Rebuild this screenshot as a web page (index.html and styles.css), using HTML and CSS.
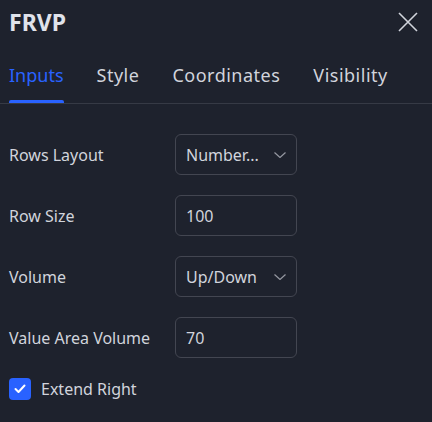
FILE: index.html
```html
<!DOCTYPE html>
<html>
<head>
<meta charset="utf-8">
<link rel="stylesheet" href="styles.css">
</head>
<body>
<div class="dialog">
  <div class="header">
    <div class="title">FRVP</div>
    <svg class="close" width="20" height="20" viewBox="0 0 20 20"><path d="M1 1L19 19M19 1L1 19" stroke="#d1d4dc" stroke-width="1.6" fill="none"/></svg>
  </div>
  <div class="tabs">
    <div class="tab active">Inputs</div>
    <div class="tab">Style</div>
    <div class="tab">Coordinates</div>
    <div class="tab">Visibility</div>
  </div>
  <div class="form">
    <div class="row">
      <div class="label">Rows Layout</div>
      <div class="box select"><span>Number...</span><svg width="12" height="6" viewBox="0 0 12 6"><path d="M0.5 0.5L6 5.5L11.5 0.5" stroke="#9598a1" stroke-width="1.2" fill="none"/></svg></div>
    </div>
    <div class="row">
      <div class="label">Row Size</div>
      <div class="box"><span>100</span></div>
    </div>
    <div class="row">
      <div class="label">Volume</div>
      <div class="box select"><span>Up/Down</span><svg width="12" height="6" viewBox="0 0 12 6"><path d="M0.5 0.5L6 5.5L11.5 0.5" stroke="#9598a1" stroke-width="1.2" fill="none"/></svg></div>
    </div>
    <div class="row">
      <div class="label">Value Area Volume</div>
      <div class="box"><span>70</span></div>
    </div>
    <div class="check-row">
      <div class="checkbox"><svg width="12" height="10" viewBox="0 0 12 10"><path d="M1.5 5L4.5 8L10.5 1.5" stroke="#fff" stroke-width="2" fill="none" stroke-linecap="round" stroke-linejoin="round"/></svg></div>
      <div class="check-label">Extend Right</div>
    </div>
  </div>
</div>
</body>
</html>
```

FILE: styles.css
```css
html, body {
  margin: 0;
  padding: 0;
  background: #1e222d;
}
body {
  width: 432px;
  height: 422px;
  overflow: hidden;
  font-family: "Noto Sans", sans-serif;
  color: #d1d4dc;
}
.header {
  height: 44px;
  display: flex;
  align-items: center;
  justify-content: space-between;
  padding: 0 14px 0 9px;
}
.title {
  font-size: 23px;
  font-weight: 700;
  color: #e0e3eb;
}
.close {
  display: block;
}
.tabs {
  height: 59px;
  display: flex;
  gap: 33px;
  padding-left: 9px;
  border-bottom: 1px solid #363a45;
}
.tab {
  position: relative;
  display: flex;
  align-items: center;
  padding-top: 3px;
  font-size: 18px;
  letter-spacing: 0.5px;
  color: #d1d4dc;
}
.tab.active {
  color: #2962ff;
  letter-spacing: 0;
}
.tab.active::after {
  content: "";
  position: absolute;
  left: 0;
  right: 0;
  bottom: 0;
  height: 3px;
  background: #2962ff;
  border-radius: 2px 2px 0 0;
}
.form {
  padding: 30px 9px 0 9px;
  display: flex;
  flex-direction: column;
  gap: 20px;
}
.row {
  display: flex;
  align-items: center;
  height: 41px;
}
.label {
  width: 166px;
  font-size: 16px;
}
.box {
  box-sizing: border-box;
  width: 122px;
  height: 41px;
  border: 1px solid #434651;
  border-radius: 6px;
  display: flex;
  align-items: center;
  justify-content: space-between;
  padding: 0 10px 0 10px;
  font-size: 16px;
}
.check-row {
  display: flex;
  align-items: center;
  gap: 10px;
  height: 22px;
}
.checkbox {
  width: 22px;
  height: 22px;
  border-radius: 4px;
  background: #2962ff;
  display: flex;
  align-items: center;
  justify-content: center;
}
.check-label {
  font-size: 16px;
}
```
